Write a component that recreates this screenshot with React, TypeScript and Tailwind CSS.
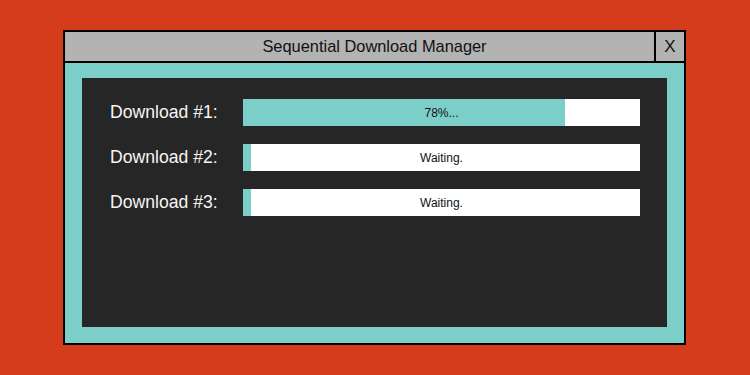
const downloads = [
  { label: "Download #1:", fill: 322, text: "78%..." },
  { label: "Download #2:", fill: 8, text: "Waiting." },
  { label: "Download #3:", fill: 8, text: "Waiting." },
];

export default function App() {
  return (
    <div
      className="w-[750px] h-[375px] bg-[#d43c1c] pt-[30px] pl-[63px]"
      style={{ fontFamily: '"Liberation Sans", Arial, sans-serif' }}
    >
      <div className="w-[623px] h-[315px] border-2 border-black flex flex-col">
        {/* title bar */}
        <div className="flex h-[31px] border-b-2 border-black bg-[#b3b3b3]">
          <div className="flex-1 flex items-center justify-center pl-[30px] text-[16.4px] text-[#111]">
            Sequential Download Manager
          </div>
          <div className="w-[30px] border-l-2 border-black flex items-center justify-center text-[17px] text-[#111]">
            X
          </div>
        </div>

        <div className="flex-1 bg-[#7ccfc9] pt-[15px] pb-[16px] px-[17px]">
          <div className="h-full bg-[#262626] pt-[21px] pl-[28px] pr-[27px] flex flex-col gap-[18px]">
            {downloads.map((d) => (
              <div key={d.label} className="flex items-center h-[27px]">
                <div className="w-[133px] text-[17.6px] text-[#f5f5f5]">{d.label}</div>
                <div className="relative flex-1 h-full bg-white">
                  <div className="h-full bg-[#7ccfc9]" style={{ width: d.fill }} />
                  <div className="absolute inset-0 flex items-center justify-center text-[12px] text-[#111]">
                    {d.text}
                  </div>
                </div>
              </div>
            ))}
          </div>
        </div>
      </div>
    </div>
  );
}
